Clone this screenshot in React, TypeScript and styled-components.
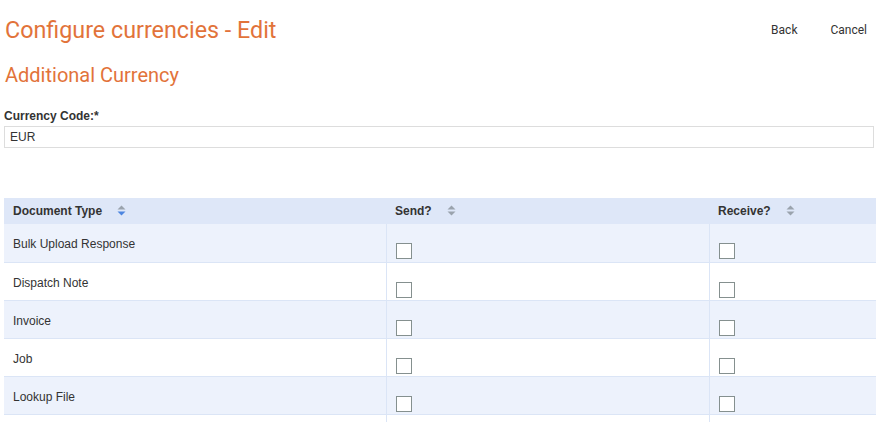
import React from "react";
import styled, { createGlobalStyle } from "styled-components";

const GlobalStyle = createGlobalStyle`
  body {
    margin: 0;
    background: #fff;
    font-family: "Liberation Sans", Arial, sans-serif;
    font-size: 12px;
    color: #333;
    overflow: hidden;
  }
`;

const Page = styled.div`
  padding: 0 2px 0 4px;
`;

const TopBar = styled.div`
  display: flex;
  align-items: flex-start;
  justify-content: space-between;
  padding-top: 15px;
  height: 47px;
`;

const Title = styled.h1`
  margin: 0 0 0 1px;
  font-family: Roboto, "Noto Sans", sans-serif;
  font-weight: 400;
  font-size: 23.3px;
  line-height: 30px;
  color: #e2733a;
`;

const Actions = styled.div`
  display: flex;
  gap: 33px;
  padding: 8px 7px 0 0;
`;

const ActionLink = styled.a`
  font-family: Roboto, "Noto Sans", sans-serif;
  font-size: 12px;
  color: #333;
  text-decoration: none;
  cursor: pointer;
`;

const SubTitle = styled.h2`
  margin: 0 0 0 1px;
  font-family: Roboto, "Noto Sans", sans-serif;
  font-weight: 400;
  font-size: 20px;
  line-height: 27px;
  color: #e2733a;
`;

const Field = styled.div`
  margin-top: 20px;
`;

const Label = styled.label`
  display: block;
  font-weight: 700;
  font-size: 12px;
  line-height: 14px;
  color: #333;
  margin-bottom: 3px;
`;

const Input = styled.input`
  box-sizing: border-box;
  display: block;
  width: 100%;
  height: 22px;
  border: 1px solid #ddd;
  padding: 0 5px;
  font-family: "Liberation Sans", Arial, sans-serif;
  font-size: 12px;
  color: #333;
  outline: none;
`;

const Table = styled.table`
  margin-top: 50px;
  width: 872px;
  border-collapse: collapse;
  table-layout: fixed;
`;

const Th = styled.th<{ $w: number }>`
  width: ${(p) => p.$w}px;
  height: 26px;
  box-sizing: border-box;
  padding: 0 9px 1px;
  background: #dee7f8;
  text-align: left;
  font-weight: 700;
  font-size: 12px;
  color: #333;
`;

const HeadInner = styled.span`
  display: inline-flex;
  align-items: center;
  gap: 15px;
`;

const Row = styled.tr<{ $alt: boolean }>`
  background: ${(p) => (p.$alt ? "#edf2fc" : "#fff")};
  border-bottom: 1px solid #dbe5f6;
`;

const Td = styled.td`
  height: 38px;
  box-sizing: border-box;
  padding: 13px 9px 0;
  vertical-align: top;
  font-size: 12px;
  color: #333;
  border-left: 1px solid #dbe5f6;
  &:first-child {
    border-left: none;
  }
`;

const Box = styled.span`
  display: block;
  width: 14px;
  height: 14px;
  margin: 6px 0 0 0;
  border: 1px solid #85908f;
  background: #fff;
`;

const SortIcon = ({ active }: { active?: boolean }) => (
  <svg width="9" height="11" viewBox="0 0 9 11">
    <path d="M4.5 0.5 L8.5 4.5 H0.5 Z" fill="#9aa3ad" />
    <path d="M0.5 6.5 H8.5 L4.5 10.5 Z" fill={active ? "#4d86e0" : "#9aa3ad"} />
  </svg>
);

const rows = [
  "Bulk Upload Response",
  "Dispatch Note",
  "Invoice",
  "Job",
  "Lookup File",
  "",
];

export default function App() {
  return (
    <Page>
      <GlobalStyle />
      <TopBar>
        <Title>Configure currencies - Edit</Title>
        <Actions>
          <ActionLink>Back</ActionLink>
          <ActionLink>Cancel</ActionLink>
        </Actions>
      </TopBar>
      <SubTitle>Additional Currency</SubTitle>
      <Field>
        <Label>Currency Code:*</Label>
        <Input defaultValue="EUR" />
      </Field>
      <Table>
        <thead>
          <tr>
            <Th $w={382}>
              <HeadInner>
                Document Type <SortIcon active />
              </HeadInner>
            </Th>
            <Th $w={323}>
              <HeadInner>
                Send? <SortIcon />
              </HeadInner>
            </Th>
            <Th $w={167}>
              <HeadInner>
                Receive? <SortIcon />
              </HeadInner>
            </Th>
          </tr>
        </thead>
        <tbody>
          {rows.map((r, i) => (
            <Row key={i} $alt={i % 2 === 0}>
              <Td>{r}</Td>
              <Td>
                <Box />
              </Td>
              <Td>
                <Box />
              </Td>
            </Row>
          ))}
        </tbody>
      </Table>
    </Page>
  );
}
